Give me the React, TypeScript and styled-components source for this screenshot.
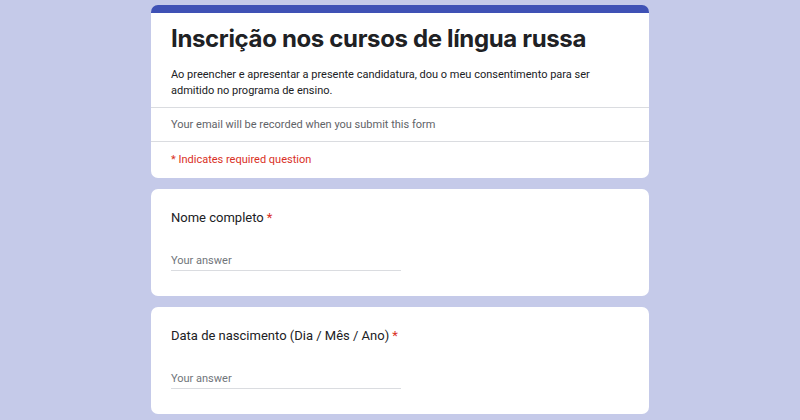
import React from "react";
import styled, { createGlobalStyle } from "styled-components";

const Global = createGlobalStyle`
  html, body { margin: 0; padding: 0; background: #c5cae9; }
  body { font-family: Roboto, "Liberation Sans", sans-serif; }
`;

const Page = styled.div`
  min-height: 420px;
  background: #c5cae9;
  padding-top: 5px;
  display: flex;
  justify-content: center;
`;

const Column = styled.div`
  width: 498px;
  display: flex;
  flex-direction: column;
  gap: 11px;
`;

const Card = styled.div<{ $accent?: boolean }>`
  background: #fff;
  border-radius: 7px;
  overflow: hidden;
  border-top: ${(p) => (p.$accent ? "8px solid #3f51b5" : "none")};
  display: flex;
  flex-direction: column;
`;

const Header = styled.div`
  padding: 10px 20px 8px;
  border-bottom: 1px solid #dadce0;
`;

const Title = styled.h1`
  margin: 0;
  font-family: Inter, "Open Sans", sans-serif;
  font-weight: 700;
  font-size: 24px;
  line-height: 32px;
  letter-spacing: -0.35px;
  color: #202124;
`;

const Description = styled.p`
  margin: 12px 0 0;
  font-size: 11px;
  line-height: 16px;
  color: #202124;
`;

const InfoRow = styled.div<{ $tone?: "muted" | "alert"; $border?: boolean }>`
  height: ${(p) => (p.$border ? "34px" : "36px")};
  padding: 0 20px ${(p) => (p.$border ? "0" : "2px")};
  box-sizing: border-box;
  display: flex;
  align-items: center;
  font-size: 11px;
  color: ${(p) => (p.$tone === "alert" ? "#d93025" : "#5f6368")};
  border-bottom: ${(p) => (p.$border ? "1px solid #dadce0" : "none")};
`;

const QuestionBody = styled.div`
  padding: 21px 20px 26px;
  height: 107px;
  box-sizing: border-box;
  display: flex;
  flex-direction: column;
`;

const QuestionLabel = styled.div`
  font-family: Roboto, sans-serif;
  font-size: 13px;
  line-height: 16px;
  color: #202124;
`;

const Star = styled.span`
  color: #d93025;
  margin-left: 3px;
`;

const AnswerLine = styled.div`
  margin-top: 28px;
  width: 230px;
  padding-bottom: 2px;
  border-bottom: 1px solid #dadce0;
  font-size: 11px;
  line-height: 14px;
  color: #70757a;
`;

function Question({ label }: { label: string }) {
  return (
    <Card>
      <QuestionBody>
        <QuestionLabel>
          {label}
          <Star>*</Star>
        </QuestionLabel>
        <AnswerLine>Your answer</AnswerLine>
      </QuestionBody>
    </Card>
  );
}

export default function App() {
  return (
    <>
      <Global />
      <Page>
        <Column>
          <Card $accent>
            <Header>
              <Title>Inscrição nos cursos de língua russa</Title>
              <Description>
                Ao preencher e apresentar a presente candidatura, dou o meu consentimento para ser
                admitido no programa de ensino.
              </Description>
            </Header>
            <InfoRow $border>Your email will be recorded when you submit this form</InfoRow>
            <InfoRow $tone="alert">* Indicates required question</InfoRow>
          </Card>
          <Question label="Nome completo" />
          <Question label="Data de nascimento (Dia / Mês / Ano)" />
        </Column>
      </Page>
    </>
  );
}
